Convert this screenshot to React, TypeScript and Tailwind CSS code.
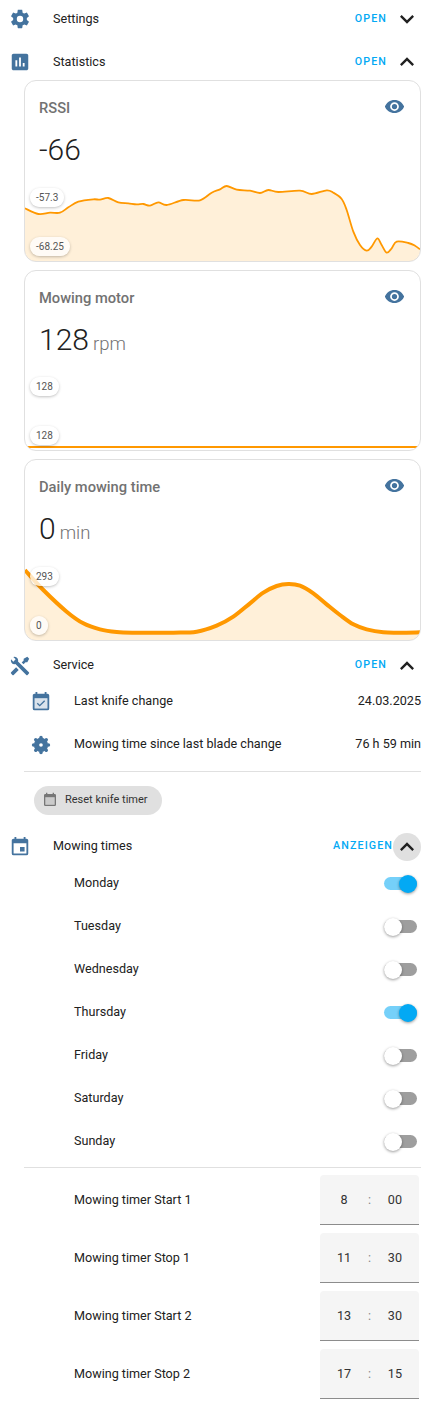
const mdi = {
  cog: "M12,15.5A3.5,3.5 0 0,1 8.5,12A3.5,3.5 0 0,1 12,8.5A3.5,3.5 0 0,1 15.5,12A3.5,3.5 0 0,1 12,15.5M19.43,12.97C19.47,12.65 19.5,12.33 19.5,12C19.5,11.67 19.47,11.34 19.43,11L21.54,9.37C21.73,9.22 21.78,8.95 21.66,8.73L19.66,5.27C19.54,5.05 19.27,4.96 19.05,5.05L16.56,6.05C16.04,5.66 15.5,5.32 14.87,5.07L14.5,2.42C14.46,2.18 14.25,2 14,2H10C9.75,2 9.54,2.18 9.5,2.42L9.13,5.07C8.5,5.32 7.96,5.66 7.44,6.05L4.95,5.05C4.73,4.96 4.46,5.05 4.34,5.27L2.34,8.73C2.21,8.95 2.27,9.22 2.46,9.37L4.57,11C4.53,11.34 4.5,11.67 4.5,12C4.5,12.33 4.53,12.65 4.57,12.97L2.46,14.63C2.27,14.78 2.21,15.05 2.34,15.27L4.34,18.73C4.46,18.95 4.73,19.03 4.95,18.95L7.44,17.94C7.96,18.34 8.5,18.68 9.13,18.93L9.5,21.58C9.54,21.82 9.75,22 10,22H14C14.25,22 14.46,21.82 14.5,21.58L14.87,18.93C15.5,18.67 16.04,18.34 16.56,17.94L19.05,18.95C19.27,19.03 19.54,18.95 19.66,18.73L21.66,15.27C21.78,15.05 21.73,14.78 21.54,14.63L19.43,12.97Z",
  chartBox: "M9 17H7V10H9V17M13 17H11V7H13V17M17 17H15V13H17V17M19 3H5C3.9 3 3 3.9 3 5V19C3 20.1 3.9 21 5 21H19C20.1 21 21 20.1 21 19V5C21 3.9 20.1 3 19 3Z",
  eye: "M12,9A3,3 0 0,0 9,12A3,3 0 0,0 12,15A3,3 0 0,0 15,12A3,3 0 0,0 12,9M12,17A5,5 0 0,1 7,12A5,5 0 0,1 12,7A5,5 0 0,1 17,12A5,5 0 0,1 12,17M12,4.5C7,4.5 2.73,7.61 1,12C2.73,16.39 7,19.5 12,19.5C17,19.5 21.27,16.39 23,12C21.27,7.61 17,4.5 12,4.5Z",
  tools: "M21.71 20.29L20.29 21.71A1 1 0 0 1 18.88 21.71L7 9.85A3.81 3.81 0 0 1 6 10A4 4 0 0 1 2.22 4.7L4.76 7.24L5.29 6.71L6.71 5.29L7.24 4.76L4.7 2.22A4 4 0 0 1 10 6A3.81 3.81 0 0 1 9.85 7L21.71 18.88A1 1 0 0 1 21.71 20.29M2.29 18.88A1 1 0 0 0 2.29 20.29L3.71 21.71A1 1 0 0 0 5.12 21.71L10.59 16.25L7.76 13.42M20 2L16 4V6L13.83 8.17L15.83 10.17L18 8H20L22 4Z",
  calendarCheck: "M19 19H5V8H19M19 3H18V1H16V3H8V1H6V3H5C3.89 3 3 3.9 3 5V19A2 2 0 0 0 5 21H19A2 2 0 0 0 21 19V5A2 2 0 0 0 19 3M16.53 11.06L15.47 10L10.59 14.88L8.47 12.76L7.41 13.82L10.59 17L16.53 11.06Z",
  calendarToday: "M19,3H18V1H16V3H8V1H6V3H5C3.89,3 3,3.9 3,5V19A2,2 0 0,0 5,21H19A2,2 0 0,0 21,19V5C21,3.9 20.1,3 19,3M19,19H5V8H19V19M12,12H17V17H12Z",
  calendarBlank: "M19 3H18V1H16V3H8V1H6V3H5C3.89 3 3 3.9 3 5V19A2 2 0 0 0 5 21H19A2 2 0 0 0 21 19V5A2 2 0 0 0 19 3M19 19H5V8H19V19Z",
  up: "M7.41,15.41L12,10.83L16.59,15.41L18,14L12,8L6,14L7.41,15.41Z",
  down: "M7.41,8.58L12,13.17L16.59,8.58L18,10L12,16L6,10L7.41,8.58Z",
};

function Icon({ d, className, body }: { d: string; className: string; body?: boolean }) {
  return (
    <svg viewBox="0 0 24 24" className={className} fill="currentColor">
      {body && <rect x="5" y="8" width="14" height="11" opacity="0.2" />}
      <path d={d} />
    </svg>
  );
}

// the blade icon: a round hub with eight lobes
function BladeIcon() {
  return (
    <svg viewBox="0 0 24 24" className="h-[22px] w-[22px] shrink-0 text-[#44739e]" fill="currentColor">
      <path
        fillRule="evenodd"
        d="M12 4.2A7.8 7.8 0 1 0 12 19.8A7.8 7.8 0 1 0 12 4.2ZM12 10A2 2 0 1 1 12 14A2 2 0 1 1 12 10Z"
      />
      {[0, 45, 90, 135, 180, 225, 270, 315].map((a) => (
        <circle key={a} cx="12" cy="3.9" r="1.9" transform={`rotate(${a} 12 12)`} />
      ))}
    </svg>
  );
}

function Section({ icon, title, action = "OPEN", open, active, className = "" }: { icon: string; title: string; action?: string; open?: boolean; active?: boolean; className?: string }) {
  return (
    <div className={`flex h-[36px] items-center pl-[9px] ${className}`}>
      <Icon d={icon} className="h-[22px] w-[22px] shrink-0 text-[#44739e]" />
      <div className="ml-[22px] flex-1 text-[12.6px] text-[#212121]">{title}</div>
      <div className={`text-[10.7px] font-medium tracking-[1.1px] text-[#03a9f4] ${active ? "" : "mr-[6px]"}`}>{action}</div>
      <div className={`mr-[6px] flex h-7 w-7 items-center justify-center rounded-full ${active ? "bg-[#e0e0e0]" : ""}`}>
        <Icon d={open ? mdi.up : mdi.down} className="h-7 w-7 text-[#212121]" />
      </div>
    </div>
  );
}

function Pill({ text, className }: { text: string; className: string }) {
  return (
    <div className={`absolute left-[5px] flex h-[19px] items-center rounded-full bg-white/75 px-[6px] text-[10px] text-[#555] shadow-[0_1px_3px_rgba(0,0,0,0.25)] ${className}`}>
      {text}
    </div>
  );
}

function StatCard({ name, value, unit, hi, lo, hiClass, loClass, line, area, stroke }: { name: string; value: string; unit?: string; hi: string; lo: string; hiClass: string; loClass: string; line: string; area?: boolean; stroke: number }) {
  return (
    <div className="relative h-[181.5px] overflow-hidden rounded-xl border border-[#e0e0e0] bg-white">
      <div className="flex items-start justify-between pl-[14px] pr-[15px] pt-[15px]">
        <div className="text-[14.7px] font-medium leading-[24px] text-[#727272]">{name}</div>
        <Icon d={mdi.eye} className="h-[21px] w-[21px] text-[#44739e]" />
      </div>
      <div className="flex items-baseline pl-[14px] pt-[8px] font-light leading-[44px]">
        <span className="text-[30px] text-[#212121]">{value}</span>
        {unit && <span className="ml-1 text-[18.5px] text-[#727272]">{unit}</span>}
      </div>
      <svg viewBox="0 0 395 80" className="absolute bottom-0 left-0 h-20 w-[395px]">
        {area && <path d={`${line} L395,80 L0,80 Z`} fill="#ff9800" fillOpacity="0.15" />}
        <path d={line} fill="none" stroke="#ff9800" strokeWidth={stroke} strokeLinejoin="round" />
      </svg>
      <Pill text={hi} className={hiClass} />
      <Pill text={lo} className={loClass} />
    </div>
  );
}

// Catmull-Rom through points read off at 3x; yOffset moves them into the chart box
function smooth(points: number[][], yOffset: number) {
  const p = points.map(([x, y]) => [x / 3 - 25, y / 3 - yOffset]);
  let d = `M${p[0][0]},${p[0][1]}`;
  for (let i = 0; i < p.length - 1; i++) {
    const p0 = p[i - 1] || p[i];
    const p1 = p[i];
    const p2 = p[i + 1];
    const p3 = p[i + 2] || p2;
    const c1x = p1[0] + (p2[0] - p0[0]) / 6;
    const c1y = p1[1] + (p2[1] - p0[1]) / 6;
    const c2x = p2[0] - (p3[0] - p1[0]) / 6;
    const c2y = p2[1] - (p3[1] - p1[1]) / 6;
    d += ` C${c1x},${c1y} ${c2x},${c2y} ${p2[0]},${p2[1]}`;
  }
  return d;
}

const rssiLine = smooth(
  [[75,625],[115,642],[150,638],[180,638],[205,622],[235,605],[280,598],[300,599],[325,594],[355,607],[385,610],[410,613],[430,612],[450,617],[475,607],[500,615],[550,600],[600,601],[635,578],[660,568],[680,558],[710,569],[750,572],[780,579],[805,570],[835,576],[900,572],[935,582],[980,571],[1000,578],[1025,597],[1040,630],[1060,695],[1080,735],[1100,752],[1115,740],[1132,715],[1145,735],[1160,758],[1175,745],[1190,725],[1225,729],[1245,737],[1260,748]],
  181,
);
const dailyLine = smooth(
  [[75,915],[130,975],[200,1040],[250,1075],[300,1093],[350,1101],[400,1103],[520,1103],[590,1100],[650,1082],[700,1055],[750,1015],[790,983],[830,963],[865,957],[900,962],[940,985],[980,1018],[1020,1050],[1060,1078],[1100,1093],[1150,1102],[1200,1103],[1260,1102]],
  295,
);

const days: [string, boolean][] = [
  ["Monday", true],
  ["Tuesday", false],
  ["Wednesday", false],
  ["Thursday", true],
  ["Friday", false],
  ["Saturday", false],
  ["Sunday", false],
];

const timers = [
  ["Mowing timer Start 1", "8", "00"],
  ["Mowing timer Stop 1", "11", "30"],
  ["Mowing timer Start 2", "13", "30"],
  ["Mowing timer Stop 2", "17", "15"],
];

export default function App() {
  return (
    <div className="h-[1402px] w-[427px] overflow-hidden bg-white font-['Roboto',sans-serif]">
      <Section icon={mdi.cog} title="Settings" className="mt-[1px]" />
      <Section icon={mdi.chartBox} title="Statistics" open className="mt-[7px]" />
      <div className="ml-6 mr-[6px] flex flex-col gap-2">
        <StatCard name="RSSI" value="-66" hi="-57.3" lo="-68.25" hiClass="top-[107px]" loClass="top-[156px]" line={rssiLine} area stroke={1.8} />
        <StatCard name="Mowing motor" value="128" unit="rpm" hi="128" lo="128" hiClass="top-[106px]" loClass="top-[155px]" line="M2,77 L393,77" stroke={2} />
        <StatCard name="Daily mowing time" value="0" unit="min" hi="293" lo="0" hiClass="top-[107px]" loClass="top-[156px]" line={dailyLine} area stroke={4} />
      </div>
      <Section icon={mdi.tools} title="Service" open className="mt-[7px]" />
      <div className="flex h-[36px] items-center pl-[30px] pr-[6px] text-[12.6px] text-[#212121]">
        <Icon d={mdi.calendarCheck} body className="h-[22px] w-[22px] text-[#44739e]" />
        <div className="ml-[22px] flex-1">Last knife change</div>
        <div>24.03.2025</div>
      </div>
      <div className="mt-[7px] flex h-[36px] items-center pl-[30px] pr-[6px] text-[12.6px] text-[#212121]">
        <BladeIcon />
        <div className="ml-[22px] flex-1">Mowing time since last blade change</div>
        <div>76 h 59 min</div>
      </div>
      <div className="ml-6 mr-[6px] mt-[8px] border-t border-[#e0e0e0]" />
      <div className="pl-[34px] pt-[14px]">
        <div className="flex h-[29px] w-[128px] items-center rounded-full bg-[#e0e0e0] pl-[8px] text-[11px] text-[#333]">
          <Icon d={mdi.calendarBlank} body className="h-4 w-4 text-[#777]" />
          <div className="ml-[7px]">Reset knife timer</div>
        </div>
      </div>
      <Section icon={mdi.calendarToday} title="Mowing times" action="ANZEIGEN" open active className="mt-[14px]" />
      <div className="ml-[74px] mr-[10px] mt-[1px] flex flex-col gap-[7px] text-[12.6px] text-[#212121]">
        {days.map(([day, on]) => (
          <div key={day} className="flex h-[36px] items-center justify-between">
            <div>{day}</div>
            <div className={`relative h-[13px] w-[33px] rounded-full ${on ? "bg-[#03a9f4]/55" : "bg-[#9e9e9e]"}`}>
              <div className={`absolute top-[-2.5px] h-[18px] w-[18px] rounded-full shadow-[0_1px_3px_rgba(0,0,0,0.4)] ${on ? "right-0 bg-[#03a9f4]" : "left-0 bg-white"}`} />
            </div>
          </div>
        ))}
      </div>
      <div className="ml-6 mr-[6px] mt-[7px] border-t border-[#e0e0e0]" />
      <div className="ml-[74px] mr-2 mt-[7px] flex flex-col gap-2 text-[12.6px] text-[#212121]">
        {timers.map(([label, h, m]) => (
          <div key={label} className="flex h-[50px] items-center justify-between">
            <div className="pt-[2px]">{label}</div>
            <div className="flex h-[50px] w-[99px] items-center justify-between rounded-t border-b border-[#8c8c8c] bg-[#f5f5f5] px-[17px] pt-[2px] text-[#333]">
              <span className="w-[14px] text-center">{h}</span>
              <span className="text-[#888]">:</span>
              <span>{m}</span>
            </div>
          </div>
        ))}
      </div>
    </div>
  );
}
